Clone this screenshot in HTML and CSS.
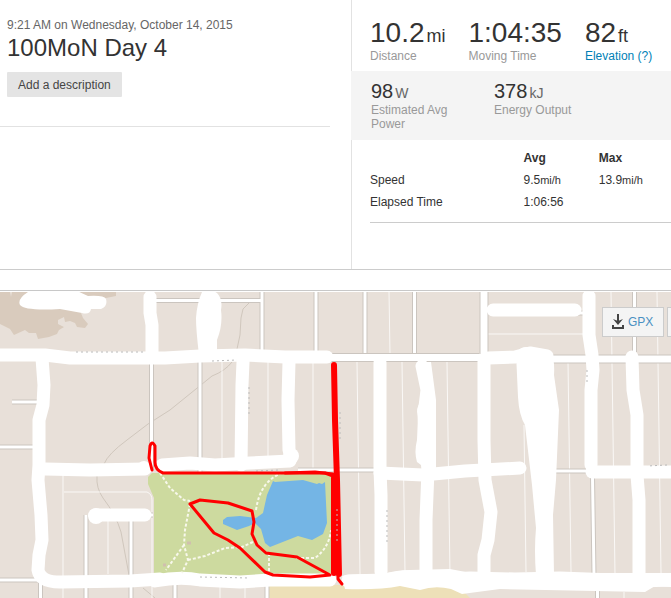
FILE: index.html
```html
<!DOCTYPE html>
<html lang="en">
<head>
  <meta charset="UTF-8">
  <meta name="viewport" content="width=device-width, initial-scale=1.0">
  <title>100MoN Day 4</title>
  <link rel="stylesheet" href="styles.css">
</head>
<body>

  <section class="activity">
    <div class="summary">
      <div class="details">
        <time datetime="2015-10-14T09:21">9:21 AM on Wednesday, October 14, 2015</time>
        <h1>100MoN Day 4</h1>
        <button type="button" class="add-description">Add a description</button>
      </div>
    </div>

    <div class="stats">
      <ul class="main-stats">
        <li><strong>10.2<small>mi</small></strong><span class="label">Distance</span></li>
        <li><strong>1:04:35</strong><span class="label">Moving Time</span></li>
        <li><strong>82<small>ft</small></strong><a href="#elevation" class="label">Elevation (?)</a></li>
      </ul>

      <ul class="power-stats">
        <li><strong>98<small>W</small></strong><span class="label">Estimated Avg Power</span></li>
        <li><strong>378<small>kJ</small></strong><span class="label">Energy Output</span></li>
      </ul>

      <div class="more-stats">
        <table>
          <thead>
            <tr><td></td><th scope="col">Avg</th><th scope="col">Max</th></tr>
          </thead>
          <tbody>
            <tr><th scope="row">Speed</th><td>9.5<small>mi/h</small></td><td>13.9<small>mi/h</small></td></tr>
            <tr><th scope="row">Elapsed Time</th><td>1:06:56</td><td></td></tr>
          </tbody>
        </table>
      </div>
    </div>
  </section>

  <section class="map">
    <svg class="map-canvas" viewBox="0 291 671 307" role="img" aria-label="Route map">
      <rect class="land" x="0" y="292" width="671" height="306"/>

      <!-- Darker ground, top left -->
      <path class="ground" d="M0 292H10L11 297L12 292H116V296L106 298H88L81 313L83 318L88 324L85 328L77 327L75 323L70 321L65 322L64 317L58 320V324L64 327L59 330L57 334L49 337L38 339L36 333H29L25 330L14 335L10 329L0 324Z"/>

      <!-- Park, lake and sand -->
      <path class="park" d="M148 477L152 473H333V577H154V498L148 484Z"/>
      <path class="lake" d="M273 481L275 482L303 480L317 484L319 483L322 484L325 482L327 523L323 534L312 540L298 536L270 547L265 543L261 529L255 523L249 526L237 530L223 524L223 520L227 517L240 516L256 518L263 513L267 495Z"/>
      <path class="sand" d="M269 585H350L462 585V590L470 598H267Z"/>

      <!-- Hiking trails -->
      <path class="trail" d="M249 303L243 309L241 318L240 335L237 349M232 362Q225 371 212 376L170 410L148 424L127 440Q108 454 104 464M97 476Q96 488 103 498Q116 515 121 532L129 575M143 588L155 598"/>

      <!-- Minor streets -->
      <path class="minor" d="M222 362V470M268 362V458M313 362V470M389 292L390 354M357 362L360 574M402 362L405 572M447 362L450 576M488 334H584M611 292L615 575M657 292L661 573M568 362L571 572M524 425L526 572M63 475V598M64 492H147Q152 494 152 500V575M108 520V574M152 586V598M220 586V598M245 586V598M624 592V598"/>

      <!-- Streets -->
      <path class="street-edge" d="M155 300.500H262M262 292V352M316 292V352M365 292V354M414.500 292V354M151.500 362V470M200 362V472M12 402H38M0 447H36M298 470H385M86 515V598M131 520V598M0 580H40M40.500 580V598M175 584V598M267 586V598M634.500 292V352M555 471H590M592.500 476L594 575M597.500 586V598M586 313H578M150 515H153"/>
      <path class="street" d="M155 300.500H262M262 292V352M316 292V352M365 292V354M414.500 292V354M151.500 362V470M200 362V472M12 402H38M0 447H36M298 470H385M86 515V598M131 520V598M0 580H40M40.500 580V598M175 584V598M267 586V598M634.500 292V352M555 471H590M592.500 476L594 575M597.500 586V598M586 313H578M150 515H153"/>
      <path class="avenue-edge" d="M325 357.500H479M484 292V355M550 359H671"/>
      <path class="avenue" d="M325 357.500H490M484 292V357M550 359H671"/>

      <!-- Wide white roads -->
      <g class="road">
        <path d="M0 355H45L70 358H165L200 356L245 355L285 357H327"/>
        <path d="M42 358L44 385L43 405L39 420V465L38 480L41 515L42 540L39 555L38 570Q40 582 60 582L130 581L160 579"/>
        <path d="M45 469L90 470L145 469"/>
        <path d="M150 297V313L152 325V352"/>
        <path d="M95 515H145"/>
        <path d="M243 362L242 385L241 465"/>
        <path d="M289 362L288 400L289 450"/>
        <path d="M162 465L190 463L215 465L250 463L290 461"/>
        <path d="M155 581Q180 576 200 580L240 582L270 580H330"/>
        <path d="M380 363V470L381 495V572"/>
        <path d="M422 366L427 390L424 415L426 450L428 470L426 520V575"/>
        <path d="M484 360V440L485 480L491 512L488 540L484 555V575"/>
        <path d="M380 473L423 475L465 471L520 468"/>
        <path d="M488 358L515 357L530 353L547 356"/>
        <path d="M348 581L385 580L405 577L430 580L470 578L515 579L560 578L640 581L671 580"/>
        <path d="M493 310H575"/>
        <path d="M589 296V335L592 355L593 370L591 390V465"/>
        <path d="M592 472H671"/>
        <path d="M632 357L633 390L637 415V475L639 500V575"/>
      </g>
      <path class="blot" d="M28 292Q17 299 20 305Q25 311 60 309L82 313Q90 315 91 309H101Q108 306 106 299Q104 295 88 296L75 290Z"/>
      <path class="blot" d="M202 292Q209 287 217 293Q223 299 221 310Q223 325 217 340V355H199Q196 330 196 318Q197 303 202 292Z"/>
      <path class="blot" d="M421 362Q414 371 421 381V401Q415 409 418 416L417 440Q414 452 417 462L425 468H436V400L431 362Z"/>
      <path class="blot" d="M516 353Q523 343 536 350L551 352Q555 360 554 375L559 410L556 480L553 515L554 575H536Q534 550 536 528L532 485L525 425Q519 415 518 397Z"/>
      <path class="blot" d="M342 576Q350 573 380 575Q395 570 410 570L450 569L471 573L540 573L671 573V587L655 586L645 592L500 589L462 594L451 589Q435 585 420 590L400 586Q380 590 345 589Z"/>
      <circle class="blot" cx="96" cy="516" r="8"/>
      <circle class="blot" cx="144" cy="468" r="7"/>
      <circle class="blot" cx="291" cy="456" r="8"/>

      <!-- Park footpaths -->
      <path class="footpath" d="M160 473L170 488L184 500L190 501M190 504L185 530L184 545L188 560L182 573M184 545L166 570M188 560L205 556L225 548L242 547L255 541M256 510Q260 482 280 474M269 553V575M296 558L315 558Q329 548 331 530"/>
      <path class="marker" d="M187 543h4M163 565h3"/>
      <path class="name-remnant" d="M212 361l25-1M76 352h70M200 577l50 1M667 465l-20 1M249 387v30M587 370v14M387 510v33M256 471l23-1"/>

      <!-- Recorded ride -->
      <g class="ride">
        <path d="M152 470L149 458L150 446Q152 440 155 446V462Q155 470 163 473H325L333 476"/>
        <path d="M190 504L200 500L228 503L252 511L254 522L252 534L257 545L266 553L297 557L330 575L310 577L273 575L265 572L240 548L228 540L214 533Z"/>
        <path class="heavy" d="M334 365L335 420L337 480L339 574"/>
        <path class="heavy" d="M334 478V573"/>
        <path d="M338 570L338 579L342 584"/>
        <path d="M285 473L315 472L333 474"/>
      </g>
      <path class="name-remnant" d="M340 412v30M337 509v34"/>
    </svg>

    <div class="map-buttons">
      <button type="button">
        <svg width="12" height="16" viewBox="0 0 12 16" aria-hidden="true">
          <path class="arrow-stem" d="M6 0V8"/>
          <path class="arrow-head" d="M1 5L6 7L11 5L6 11Z"/>
          <path class="tray" d="M1 11V14H11V11"/>
        </svg>
        GPX
      </button>
      <button type="button" aria-label="More"></button>
    </div>
  </section>

</body>
</html>
```

FILE: styles.css
```css
* {
  box-sizing: border-box;
}
body {
  margin: 0;
  font-family: "Liberation Sans", Arial, sans-serif;
  font-size: 12px;
  color: #333;
  background: white;
}
ul {
  list-style: none;
  margin: 0;
  padding: 0;
}
.activity {
  display: grid;
  grid-template-columns: 351fr 320fr;
  border-bottom: 1px solid #ccc;
}
.details {
  margin-right: 21px;
  padding: 17px 7px 29px;
  border-bottom: 1px solid #e2e2e2;
}
.details time {
  display: block;
  line-height: 16px;
  color: #666;
}
h1 {
  margin: 0 0 9px;
  font-size: 24px;
  line-height: 30px;
  font-weight: normal;
}
.add-description {
  display: block;
  height: 25px;
  padding: 0 11px;
  border: none;
  border-radius: 1px;
  background: #e4e4e4;
  font: inherit;
  color: #444;
  cursor: pointer;
}

/* Stats column */
.stats {
  border-left: 1px solid #e2e2e2;
  padding-bottom: 46px;
}
.stats strong {
  display: block;
  font-weight: normal;
  white-space: nowrap;
}
.stats small {
  line-height: 1;
}
.label {
  display: block;
  line-height: 14px;
  color: #999;
}
a.label {
  color: #007fb6;
  text-decoration: none;
}
.main-stats {
  display: flex;
  gap: 23px;
  padding: 16px 0 8px 18px;
}
.main-stats strong {
  font-size: 28px;
  line-height: 33px;
}
.main-stats small {
  margin-left: 2px;
  font-size: 18px;
}
.power-stats {
  display: grid;
  grid-template-columns: 83px 1fr;
  gap: 40px;
  margin-left: -1px;
  padding: 8px 0 9px 20px;
  background: #f4f4f4;
}
.power-stats strong {
  font-size: 20px;
  line-height: 24px;
}
.power-stats small {
  margin-left: 2px;
  font-size: 14px;
  color: #666;
}
.more-stats {
  padding: 7px 0 0 18px;
}
table {
  width: 100%;
  table-layout: fixed;
  border-collapse: collapse;
  border-bottom: 1px solid #ccc;
}
thead td {
  width: 51%;
}
thead th:nth-child(2) {
  width: 25%;
}
th, td {
  padding: 0;
  height: 22px;
  text-align: left;
}
tbody th {
  font-weight: normal;
}
tbody tr:last-child > * {
  height: 31px;
  padding-bottom: 9px;
}
td small {
  font-size: 11px;
}

/* Map */
.map {
  position: relative;
  overflow: hidden;
  margin-top: 20px;
  border-top: 1px solid #c8c8c8;
}
.map-canvas {
  display: block;
  width: 100%;
}
.map-canvas path {
  fill: none;
  stroke-linejoin: round;
}
.land {
  fill: #e8e0d9;
}
.map-canvas .ground {
  fill: #d9cbbd;
}
.map-canvas .park {
  fill: #cdda9f;
}
.map-canvas .lake {
  fill: #74b5e5;
}
.map-canvas .sand {
  fill: #ede0b8;
}
.map-canvas .blot {
  fill: white;
}
.trail {
  stroke: #d0c7bd;
  stroke-width: 1;
}
.minor {
  stroke: #faf8f6;
  stroke-width: 1;
}
.street-edge {
  stroke: #cbc5bf;
  stroke-width: 5;
}
.street {
  stroke: white;
  stroke-width: 3;
}
.avenue-edge {
  stroke: #cbc5bf;
  stroke-width: 9;
}
.avenue {
  stroke: white;
  stroke-width: 7;
}
.road {
  stroke: white;
  stroke-width: 13;
  stroke-linecap: round;
}
.footpath {
  stroke: #f8f8ec;
  stroke-width: 2;
  stroke-dasharray: 3 2;
}
.marker {
  stroke: #d0bfae;
  stroke-width: 3;
}
.name-remnant {
  stroke: #bbb;
  stroke-width: 1;
  stroke-dasharray: 2 3;
}
.ride {
  stroke: #f00;
  stroke-width: 3;
  stroke-linecap: round;
}
.ride .heavy {
  stroke-width: 6;
}
.map-buttons {
  position: absolute;
  top: 16px;
  left: calc(100% - 69px);
  display: flex;
  gap: 3px;
}
.map-buttons button {
  display: flex;
  flex-shrink: 0;
  align-items: center;
  gap: 4px;
  width: 62px;
  height: 30px;
  padding: 0 9px;
  border: 1px solid #ccc;
  background: #f4f4f4;
  font: inherit;
  color: #4a90c2;
  cursor: pointer;
}
.arrow-stem, .tray {
  fill: none;
  stroke: #444;
  stroke-width: 2;
}
.arrow-head {
  fill: #444;
}
```
